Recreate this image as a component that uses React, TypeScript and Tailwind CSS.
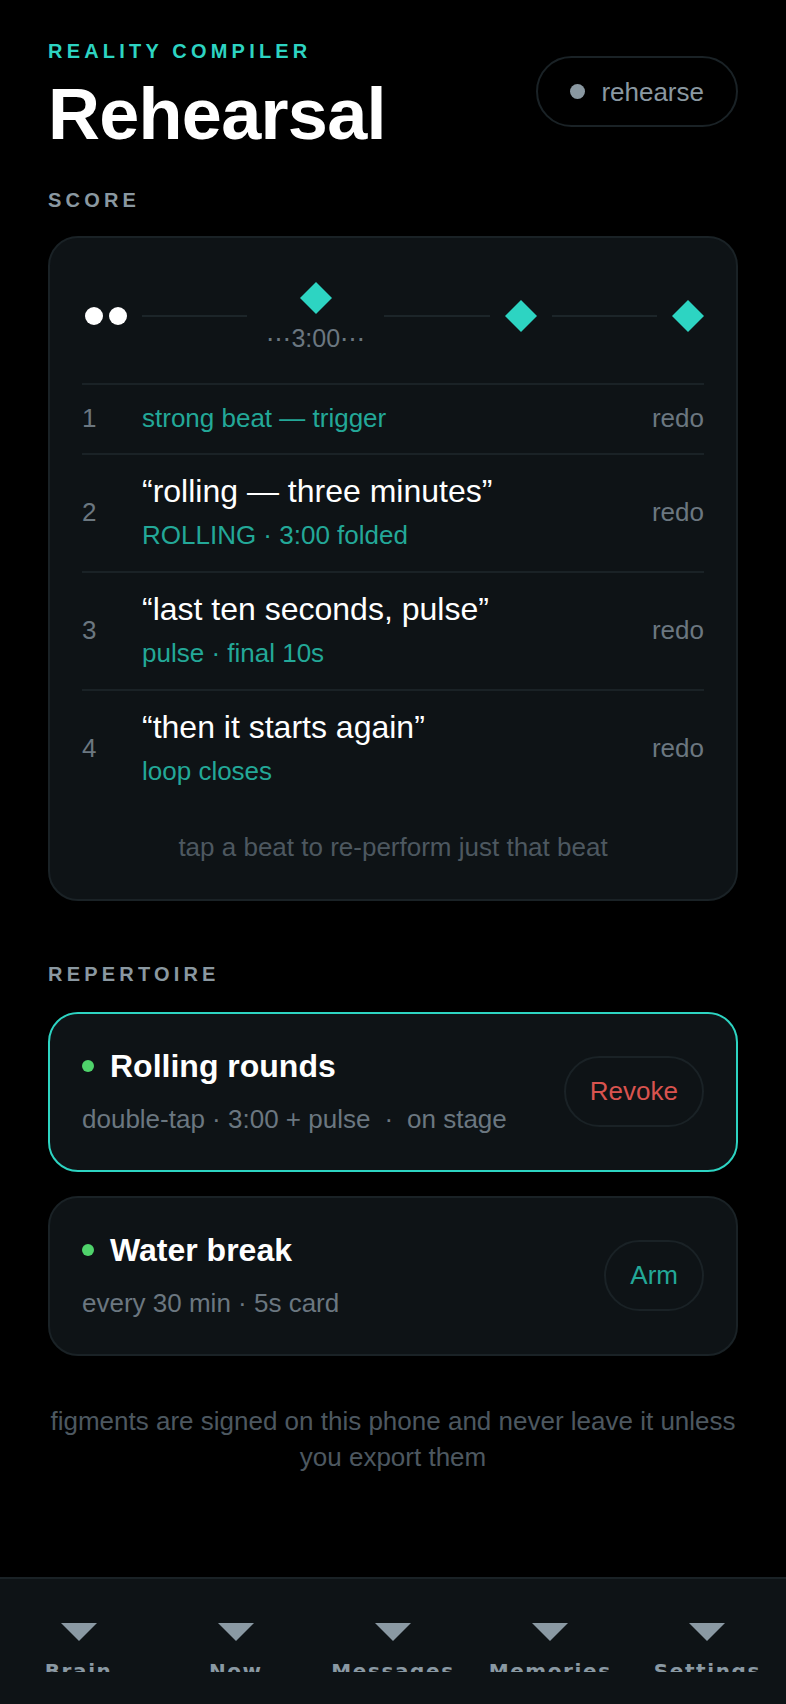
import { Fragment } from 'react';

type Beat = {
    n: number;
    quote?: string;
    cue: string;
};

const beats: Beat[] = [
    { n: 1, cue: 'strong beat — trigger' },
    { n: 2, quote: '“rolling — three minutes”', cue: 'ROLLING · 3:00 folded' },
    { n: 3, quote: '“last ten seconds, pulse”', cue: 'pulse · final 10s' },
    { n: 4, quote: '“then it starts again”', cue: 'loop closes' },
];

const tabs = ['Brain', 'Now', 'Messages', 'Memories', 'Settings'];

function Diamond() {
    return (
        <svg width="32" height="32" viewBox="0 0 32 32" className="shrink-0">
            <polygon points="16,0 32,16 16,32 0,16" fill="#2dd4c2" />
        </svg>
    );
}

function SectionLabel({ children }: { children: string }) {
    return (
        <div className="text-[20px] leading-[28px] font-bold tracking-[0.21em] text-[#8a98a1]">
            {children}
        </div>
    );
}

function Timeline() {
    return (
        <div className="mt-[44px] mb-[33px] flex items-center gap-[15px]">
            <div className="ml-[3px] flex gap-[6px]">
                <span className="h-[18px] w-[18px] rounded-full bg-white" />
                <span className="h-[18px] w-[18px] rounded-full bg-white" />
            </div>
            <div className="h-[2px] flex-1 bg-[#1c2529]" />
            <div className="flex flex-col items-center px-[4px]">
                <Diamond />
                <span className="mt-3 text-[25px] leading-6 text-[#6b7780]">
                    ⋯3:00⋯
                </span>
            </div>
            <div className="h-[2px] flex-1 bg-[#1c2529]" />
            <Diamond />
            <div className="h-[2px] flex-1 bg-[#1c2529]" />
            <Diamond />
        </div>
    );
}

function BeatRow({ beat }: { beat: Beat }) {
    return (
        <div
            className={
                beat.quote
                    ? 'flex items-center border-t-2 border-[#1a2226] pt-4 pb-[18px]'
                    : 'flex items-center border-t-2 border-[#1a2226] pt-[15px] pb-[17px]'
            }
        >
            <span className="w-[60px] text-[26px] leading-9 text-[#6b7780]">
                {beat.n}
            </span>
            <div className="flex-1">
                {beat.quote && (
                    <div className="text-[32px] leading-10 text-white">
                        {beat.quote}
                    </div>
                )}
                <div
                    className={
                        beat.quote
                            ? 'mt-[6px] text-[26px] leading-9 text-[#23a898]'
                            : 'text-[26px] leading-9 text-[#23a898]'
                    }
                >
                    {beat.cue}
                </div>
            </div>
            <span className="text-[26px] leading-9 text-[#6b7780]">redo</span>
        </div>
    );
}

type Figment = {
    title: string;
    meta: React.ReactNode;
    action: string;
    active: boolean;
};

function FigmentCard({ figment }: { figment: Figment }) {
    return (
        <div
            className={
                figment.active
                    ? 'flex items-center justify-between rounded-[30px] border-2 border-[#2dd4c2] bg-[#0e1316] px-8 pt-8 pb-[33px]'
                    : 'flex items-center justify-between rounded-[30px] border-2 border-[#1a2226] bg-[#0e1316] px-8 pt-8 pb-[33px]'
            }
        >
            <div>
                <div className="flex items-center gap-4">
                    <span className="h-[12px] w-[12px] rounded-full bg-[#4fd36b]" />
                    <span className="text-[32px] leading-10 font-bold text-white">
                        {figment.title}
                    </span>
                </div>
                <div className="mt-[15px] text-[26px] leading-9 text-[#6b7780]">
                    {figment.meta}
                </div>
            </div>
            <button
                className={
                    figment.active
                        ? 'flex h-[71px] items-center rounded-full border-2 border-[#1a2226] px-[24px] text-[26px] text-[#d9534f]'
                        : 'flex h-[71px] items-center rounded-full border-2 border-[#1a2226] px-[24px] text-[26px] text-[#23a898]'
                }
            >
                {figment.action}
            </button>
        </div>
    );
}

export default function App() {
    const figments: Figment[] = [
        {
            title: 'Rolling rounds',
            meta: (
                <>
                    double-tap · 3:00 + pulse
                    <span className="mx-[14px]">·</span>
                    on stage
                </>
            ),
            action: 'Revoke',
            active: true,
        },
        {
            title: 'Water break',
            meta: 'every 30 min · 5s card',
            action: 'Arm',
            active: false,
        },
    ];

    return (
        <div className="flex min-h-[1704px] flex-col bg-black font-['Liberation_Sans',Arial,sans-serif]">
            <main className="flex-1 px-12">
                <header className="flex items-start justify-between pt-[37px]">
                    <div>
                        <div className="text-[20px] leading-[28px] font-bold tracking-[0.21em] text-[#2dd4c2]">
                            REALITY COMPILER
                        </div>
                        <h1 className="mt-[13px] text-[72px] leading-[72px] font-bold tracking-[-0.01em] text-white">
                            Rehearsal
                        </h1>
                    </div>
                    <div className="mt-[19px] flex h-[71px] items-center gap-4 rounded-full border-2 border-[#1a2226] px-8">
                        <span className="h-[15px] w-[15px] rounded-full bg-[#8a98a1]" />
                        <span className="text-[26px] leading-9 text-[#8a98a1]">
                            rehearse
                        </span>
                    </div>
                </header>

                <div className="mt-[36px]">
                    <SectionLabel>SCORE</SectionLabel>
                </div>

                <section className="mt-[22px] rounded-[30px] border-2 border-[#1a2226] bg-[#0e1316] px-8 pb-[34px]">
                    <Timeline />
                    {beats.map((b) => (
                        <Fragment key={b.n}>
                            <BeatRow beat={b} />
                        </Fragment>
                    ))}
                    <p className="mt-[22px] text-center text-[26px] leading-9 text-[#4d5860]">
                        tap a beat to re-perform just that beat
                    </p>
                </section>

                <div className="mt-[59px]">
                    <SectionLabel>REPERTOIRE</SectionLabel>
                </div>

                <div className="mt-6 flex flex-col gap-6">
                    {figments.map((f) => (
                        <FigmentCard key={f.title} figment={f} />
                    ))}
                </div>

                <p className="-mx-1 mt-[47px] text-center text-[26px] leading-9 text-[#4d5860]">
                    figments are signed on this phone and never leave it unless
                    you export them
                </p>
            </main>

            <nav className="grid h-[127px] grid-cols-5 border-t-2 border-[#1a2226] bg-[#0e1316]">
                {tabs.map((t) => (
                    <div key={t} className="flex flex-col items-center pt-[44px]">
                        <svg width="36" height="18" viewBox="0 0 36 18">
                            <polygon points="0,0 36,0 18,18" fill="#8a99a3" />
                        </svg>
                        <div className="mt-[20px] h-[11px] overflow-hidden">
                            <span className="block font-['DejaVu_Sans',sans-serif] text-[20px] leading-[20px] font-bold tracking-[0.08em] text-[#8a99a3]">
                                {t}
                            </span>
                        </div>
                    </div>
                ))}
            </nav>
        </div>
    );
}
